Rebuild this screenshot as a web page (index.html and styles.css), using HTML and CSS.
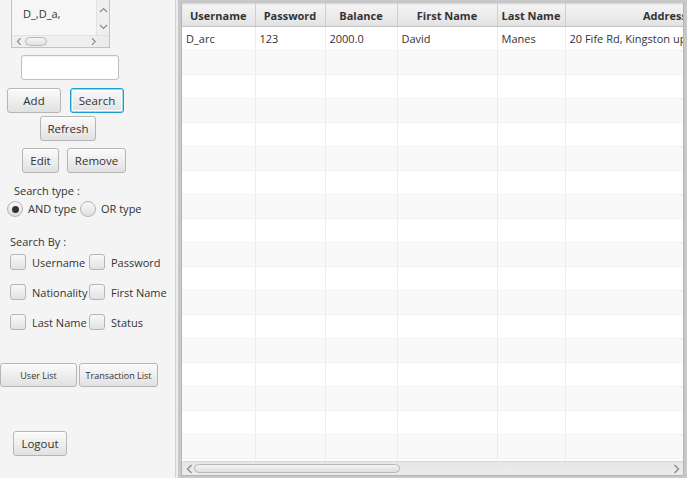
FILE: index.html
```html
<!DOCTYPE html>
<html>
<head>
<meta charset="utf-8">
<link rel="stylesheet" href="styles.css">
</head>
<body>
<div class="app">
  <aside class="left">
    <div class="listbox">
      <div class="list-main">
        <div class="list-cells"><div class="list-cell">D_,D_a,</div></div>
        <div class="vbar">
          <svg class="arrow" width="9" height="6" viewBox="0 0 9 6"><path d="M1 5 L4.5 1.5 L8 5" fill="none" stroke="#8a8a8a" stroke-width="1.2"/></svg>
          <svg class="arrow" width="9" height="6" viewBox="0 0 9 6"><path d="M1 1 L4.5 4.5 L8 1" fill="none" stroke="#8a8a8a" stroke-width="1.2"/></svg>
        </div>
      </div>
      <div class="hbar-small">
        <svg width="6" height="9" viewBox="0 0 6 9"><path d="M5 1 L1.5 4.5 L5 8" fill="none" stroke="#8a8a8a" stroke-width="1.2"/></svg>
        <div class="thumb-small"></div>
        <svg class="right-arrow" width="6" height="9" viewBox="0 0 6 9"><path d="M1 1 L4.5 4.5 L1 8" fill="none" stroke="#8a8a8a" stroke-width="1.2"/></svg>
        <div class="corner"></div>
      </div>
    </div>

    <input class="field" type="text">

    <div class="row r-addsearch">
      <button class="btn b-add">Add</button>
      <button class="btn b-search focused">Search</button>
    </div>
    <div class="row r-refresh">
      <button class="btn b-refresh">Refresh</button>
    </div>
    <div class="row r-edit">
      <button class="btn b-edit">Edit</button>
      <button class="btn b-remove">Remove</button>
    </div>

    <div class="label l-stype">Search type :</div>
    <div class="row r-radio">
      <div class="radio-item ri-and"><span class="radio on"></span><span>AND type</span></div>
      <div class="radio-item"><span class="radio"></span><span>OR type</span></div>
    </div>

    <div class="label l-sby">Search By :</div>
    <div class="checks">
      <div class="chk"><span class="box"></span><span>Username</span></div>
      <div class="chk"><span class="box"></span><span>Password</span></div>
      <div class="chk"><span class="box"></span><span>Nationality</span></div>
      <div class="chk"><span class="box"></span><span>First Name</span></div>
      <div class="chk"><span class="box"></span><span>Last Name</span></div>
      <div class="chk"><span class="box"></span><span>Status</span></div>
    </div>

    <div class="row r-lists">
      <button class="btn small b-user">User List</button>
      <button class="btn small b-trans">Transaction List</button>
    </div>
    <div class="row r-logout">
      <button class="btn b-logout">Logout</button>
    </div>
  </aside>

  <div class="divider"></div>

  <main class="right">
    <div class="tablebox">
      <div class="viewport">
        <table class="grid">
          <colgroup>
            <col class="c1"><col class="c2"><col class="c3"><col class="c4"><col class="c5"><col class="c6">
          </colgroup>
          <thead>
            <tr><th>Username</th><th>Password</th><th>Balance</th><th>First Name</th><th>Last Name</th><th>Address</th></tr>
          </thead>
          <tbody>
            <tr><td>D_arc</td><td>123</td><td>2000.0</td><td>David</td><td>Manes</td><td>20 Fife Rd, Kingston upon Thames</td></tr>
            <tr><td></td><td></td><td></td><td></td><td></td><td></td></tr>
            <tr><td></td><td></td><td></td><td></td><td></td><td></td></tr>
            <tr><td></td><td></td><td></td><td></td><td></td><td></td></tr>
            <tr><td></td><td></td><td></td><td></td><td></td><td></td></tr>
            <tr><td></td><td></td><td></td><td></td><td></td><td></td></tr>
            <tr><td></td><td></td><td></td><td></td><td></td><td></td></tr>
            <tr><td></td><td></td><td></td><td></td><td></td><td></td></tr>
            <tr><td></td><td></td><td></td><td></td><td></td><td></td></tr>
            <tr><td></td><td></td><td></td><td></td><td></td><td></td></tr>
            <tr><td></td><td></td><td></td><td></td><td></td><td></td></tr>
            <tr><td></td><td></td><td></td><td></td><td></td><td></td></tr>
            <tr><td></td><td></td><td></td><td></td><td></td><td></td></tr>
            <tr><td></td><td></td><td></td><td></td><td></td><td></td></tr>
            <tr><td></td><td></td><td></td><td></td><td></td><td></td></tr>
            <tr><td></td><td></td><td></td><td></td><td></td><td></td></tr>
            <tr><td></td><td></td><td></td><td></td><td></td><td></td></tr>
            <tr><td></td><td></td><td></td><td></td><td></td><td></td></tr>
            <tr><td></td><td></td><td></td><td></td><td></td><td></td></tr>
          </tbody>
        </table>
      </div>
      <div class="hbar">
        <svg width="7" height="10" viewBox="0 0 7 10"><path d="M5.5 1 L1.5 5 L5.5 9" fill="none" stroke="#8a8a8a" stroke-width="1.3"/></svg>
        <div class="thumb"></div>
        <svg class="right-arrow" width="7" height="10" viewBox="0 0 7 10"><path d="M1.5 1 L5.5 5 L1.5 9" fill="none" stroke="#8a8a8a" stroke-width="1.3"/></svg>
      </div>
    </div>
  </main>
</div>
</body>
</html>
```

FILE: styles.css
```css
* { box-sizing: border-box; }
html, body {
  margin: 0;
  padding: 0;
  width: 687px;
  height: 478px;
  overflow: hidden;
  background: #f4f4f4;
  font-family: "Open Sans", "Noto Sans", "Liberation Sans", sans-serif;
  font-size: 11px;
  color: #333;
}
.app {
  display: flex;
  height: 478px;
}
.left {
  width: 176px;
  flex: none;
  border-right: 1px solid #d2d2d2;
  background: #f4f4f4;
  display: flex;
  flex-direction: column;
  align-items: flex-start;
  overflow: hidden;
}
.divider {
  width: 2px;
  flex: none;
  background: #ececec;
}
.right {
  flex: 1;
  min-width: 0;
  background: #c8c8c8;
  padding: 3px 3px 2px 3px;
  display: flex;
}
.tablebox {
  flex: 1;
  min-width: 0;
  border: 1px solid #b4b4b4;
  border-top: 0;
  background: #fff;
  display: flex;
  flex-direction: column;
  overflow: hidden;
}
.viewport {
  flex: 1;
  overflow: hidden;
}
.grid {
  border-collapse: collapse;
  table-layout: fixed;
  width: 583px;
}
.c1 { width: 73px; }
.c2 { width: 70px; }
.c3 { width: 72px; }
.c4 { width: 100px; }
.c5 { width: 68px; }
.c6 { width: 200px; }
.grid th {
  height: 23px;
  padding: 0 4px;
  font-weight: bold;
  color: #333;
  background: linear-gradient(#f4f4f4, #e2e2e2);
  border-right: 1px solid #cfcfcf;
  border-bottom: 1px solid #c4c4c4;
  border-top: 1px solid #dcdcdc;
  text-align: center;
  white-space: nowrap;
  overflow: hidden;
}
.grid td {
  height: 24px;
  padding: 0 4px;
  border-right: 1px solid #ececec;
  border-bottom: 1px solid #f0f0f0;
  white-space: nowrap;
  overflow: hidden;
  text-overflow: ellipsis;
  color: #333;
}
.grid tbody tr:nth-child(even) td { background: #f9f9f9; }
.grid tbody tr:nth-child(odd) td { background: #fff; }

.hbar {
  flex: none;
  height: 14px;
  background: linear-gradient(#e6e6e6, #ececec);
  border-top: 1px solid #d6d6d6;
  display: flex;
  align-items: center;
  padding: 0 3px 0 4px;
}
.thumb {
  margin-left: 1px;
  width: 206px;
  height: 9px;
  border: 1px solid #b8b8b8;
  border-radius: 5px;
  background: linear-gradient(#f4f4f4, #dedede);
}
.right-arrow { margin-left: auto; }

/* list box */
.listbox {
  margin-top: -4px;
  margin-left: 11px;
  width: 99px;
  height: 52px;
  border: 1px solid #c2c2c2;
  background: #f6f6f6;
  display: flex;
  flex-direction: column;
}
.list-main {
  flex: 1;
  display: flex;
}
.list-cells {
  flex: 1;
  padding-top: 9px;
}
.list-cell {
  padding-left: 11px;
  height: 16px;
  line-height: 16px;
  color: #333;
}
.vbar {
  width: 13px;
  background: #efefef;
  border-left: 1px solid #e2e2e2;
  display: flex;
  flex-direction: column;
  align-items: center;
  justify-content: space-between;
  padding: 10px 0 5px;
}
.hbar-small {
  height: 12px;
  flex: none;
  background: #efefef;
  border-top: 1px solid #e2e2e2;
  display: flex;
  align-items: center;
  padding-left: 4px;
}
.thumb-small {
  margin-left: 3px;
  width: 24px;
  height: 9px;
  border: 1px solid #b8b8b8;
  border-radius: 5px;
  background: linear-gradient(#f6f6f6, #e0e0e0);
}
.hbar-small .right-arrow { margin-left: 44px; }
.corner {
  margin-left: auto;
  width: 13px;
  height: 11px;
  background: #ececec;
}

.field {
  margin-top: 7px;
  margin-left: 21px;
  width: 98px;
  height: 25px;
  border: 1px solid #c0c0c0;
  border-radius: 3px;
  background: #fff;
  box-shadow: inset 0 1px 1px rgba(0,0,0,0.05);
  outline: none;
  padding: 0 6px;
}

.row { display: flex; }
.btn {
  font-family: inherit;
  font-size: 11.5px;
  color: #333;
  height: 25px;
  border: 1px solid #b5b5b5;
  border-radius: 3px;
  background: linear-gradient(#fbfbfb, #e1e1e1);
  padding: 0;
  margin: 0;
  box-shadow: inset 0 1px 0 #fff;
  white-space: nowrap;
}
.btn.focused {
  border: 1px solid #1a9ed6;
  box-shadow: inset 0 0 0 1px #9fd6ef, inset 0 0 0 2px #fff;
}
.btn.small { font-size: 9px; height: 24px; }

.r-addsearch { margin-top: 8px; }
.b-add { margin-left: 7px; width: 54px; }
.b-search { margin-left: 9px; width: 54px; }
.r-refresh { margin-top: 3px; }
.b-refresh { margin-left: 40px; width: 56px; }
.r-edit { margin-top: 7px; }
.b-edit { margin-left: 22px; width: 37px; }
.b-remove { margin-left: 8px; width: 59px; }

.label { height: 16px; line-height: 16px; }
.l-stype { margin-top: 10px; margin-left: 14px; }
.r-radio { margin-top: 2px; margin-left: 7px; height: 16px; align-items: center; }
.radio-item { display: flex; align-items: center; gap: 5px; line-height: 16px; white-space: nowrap; }
.ri-and { width: 73px; }
.radio {
  width: 16px;
  height: 16px;
  border-radius: 50%;
  border: 1px solid #b5b5b5;
  background: linear-gradient(#f8f8f8, #e0e0e0);
  display: flex;
  align-items: center;
  justify-content: center;
  flex: none;
}
.radio.on::after {
  content: "";
  width: 7px;
  height: 7px;
  border-radius: 50%;
  background: #333;
}

.l-sby { margin-top: 17px; margin-left: 10px; }
.checks {
  margin-top: 4px;
  margin-left: 10px;
  display: grid;
  grid-template-columns: 79px auto;
  row-gap: 14px;
}
.chk {
  display: flex;
  align-items: center;
  gap: 6px;
  height: 16px;
  white-space: nowrap;
}
.box {
  width: 16px;
  height: 16px;
  flex: none;
  border: 1px solid #b5b5b5;
  border-radius: 3px;
  background: linear-gradient(#f8f8f8, #e2e2e2);
}

.r-lists { margin-top: 33px; }
.b-user { margin-left: 0; width: 77px; }
.b-trans { margin-left: 2px; width: 79px; }
.r-logout { margin-top: 44px; }
.b-logout { margin-left: 13px; width: 54px; }
```
